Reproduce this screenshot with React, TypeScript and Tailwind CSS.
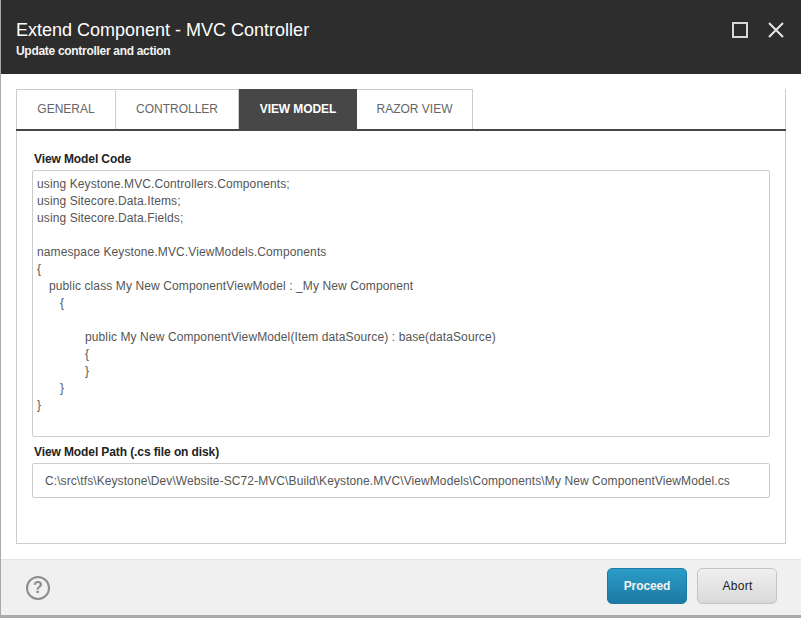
import React from 'react';

const codeLines: { text: string; indent: string }[] = [
  { text: 'using Keystone.MVC.Controllers.Components;', indent: 'pl-0' },
  { text: 'using Sitecore.Data.Items;', indent: 'pl-0' },
  { text: 'using Sitecore.Data.Fields;', indent: 'pl-0' },
  { text: '\u00a0', indent: 'pl-0' },
  { text: 'namespace Keystone.MVC.ViewModels.Components', indent: 'pl-0' },
  { text: '{', indent: 'pl-0' },
  { text: 'public class My New ComponentViewModel : _My New Component', indent: 'pl-[12px]' },
  { text: '{', indent: 'pl-[23px]' },
  { text: '\u00a0', indent: 'pl-0' },
  { text: 'public My New ComponentViewModel(Item dataSource) : base(dataSource)', indent: 'pl-[48px]' },
  { text: '{', indent: 'pl-[48px]' },
  { text: '}', indent: 'pl-[48px]' },
  { text: '}', indent: 'pl-[23px]' },
  { text: '}', indent: 'pl-0' },
];

const tabs = ['GENERAL', 'CONTROLLER', 'VIEW MODEL', 'RAZOR VIEW'];
const tabWidths = ['w-[100px]', 'w-[123px]', 'w-[118px]', 'w-[116px]'];

export default function App() {
  return (
    <div className="h-[618px] w-[801px] overflow-hidden bg-[#a9a9a9] pl-px pb-[3px] font-['Liberation_Sans',Arial,sans-serif]">
      <div className="flex h-[615px] flex-col bg-white">
        <header className="flex h-[74px] items-start justify-between bg-[#2d2d2d] pl-[15px] pr-[17px]">
          <div>
            <h1 className="mt-[18px] text-[18px] leading-[24px] text-white">Extend Component - MVC Controller</h1>
            <p className="mt-[1px] text-[12px] leading-[16px] font-bold tracking-[-0.3px] text-[#f4f4f4]">Update controller and action</p>
          </div>
          <div className="mt-[22px] flex items-center gap-[20px]">
            <span className="h-[16px] w-[16px] border-2 border-[#d9d9d9]" />
            <svg width="16" height="16" viewBox="0 0 16 16" className="text-[#e6e6e6]">
              <path d="M1 1 L15 15 M15 1 L1 15" stroke="currentColor" strokeWidth="2" fill="none" />
            </svg>
          </div>
        </header>

        <main className="flex-1 px-[15px] pt-[15px]">
          <div className="flex h-[455px] flex-col border-x border-b border-[#cccccc]">
            <div className="-mx-px flex h-[42px] border-b-2 border-[#474747]">
              {tabs.map((tab, i) => (
                <div
                  key={tab}
                  className={`flex h-[40px] items-center justify-center text-[12px] ${tabWidths[i]} ${
                    tab === 'VIEW MODEL'
                      ? 'bg-[#474747] font-bold text-white tracking-[-0.1px]'
                      : 'border-y border-r border-[#cccccc] border-b-0 pb-[1px] text-[#666666] first:border-l'
                  }`}
                >
                  {tab}
                </div>
              ))}
            </div>

            <div className="px-[15px] pt-[20px]">
              <label className="block pl-[2px] text-[12px] leading-[16px] font-bold tracking-[-0.1px] text-[#222222]">View Model Code</label>
              <div className="mt-[3px] h-[267px] rounded-[2px] border border-[#cccccc] pl-[4px] pt-[5px] text-[12px] leading-[17px] tracking-[0.11px] text-[#555555]">
                {codeLines.map((line, i) => (
                  <div key={i} className={line.indent}>
                    {line.text}
                  </div>
                ))}
              </div>
              <label className="mt-[7px] block pl-[2px] text-[12px] leading-[16px] font-bold tracking-[-0.1px] text-[#222222]">
                View Model Path (.cs file on disk)
              </label>
              <div className="mt-[3px] flex h-[35px] items-center rounded-[2px] border border-[#cccccc] pl-[12px] text-[12px] tracking-[0.09px] text-[#555555]">
                {'C:\\src\\tfs\\Keystone\\Dev\\Website-SC72-MVC\\Build\\Keystone.MVC\\ViewModels\\Components\\My New ComponentViewModel.cs'}
              </div>
            </div>
          </div>
        </main>

        <footer className="flex h-[56px] items-center justify-between border-t border-[#e3e3e3] bg-[#f0f0f0] pl-[25px] pr-[24px]">
          <div className="flex h-[24px] w-[24px] items-center justify-center rounded-full border-[2px] border-[#8c8c8c] text-[16px] font-bold text-[#8c8c8c]">
            ?
          </div>
          <div className="mb-[3px] flex gap-[10px]">
            <button className="h-[36px] w-[80px] rounded-[5px] border border-[#1d7aa0] bg-gradient-to-b from-[#2b9cc8] to-[#1c7aa3] text-[12px] font-bold tracking-[-0.1px] text-[#f2f2f2]">
              Proceed
            </button>
            <button className="h-[36px] w-[80px] rounded-[5px] border border-[#c4c4c4] bg-gradient-to-b from-[#f0f0f0] to-[#d9d9d9] pl-[1px] text-[12px] tracking-[0.3px] text-[#222222]">
              Abort
            </button>
          </div>
        </footer>
      </div>
    </div>
  );
}
